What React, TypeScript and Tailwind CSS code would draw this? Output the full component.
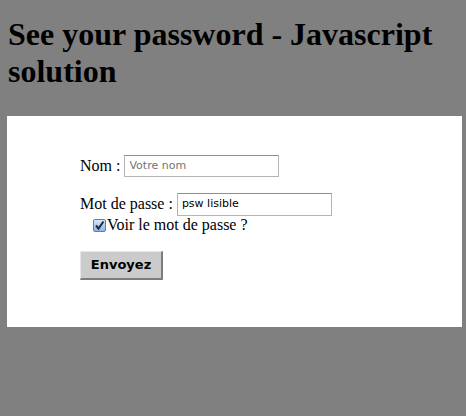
import React from 'react';

const serif = { fontFamily: '"Liberation Serif", "Times New Roman", serif' };
const sans = { fontFamily: '"DejaVu Sans", "Liberation Sans", sans-serif' };

export default function App() {
    return (
        <div className="w-[466px] h-[416px] bg-[#808080] overflow-hidden" style={serif}>
            <h1 className="m-0 pt-[16px] pl-[8px] text-[32px] leading-[37px] font-bold text-black">
                See your password - Javascript solution
            </h1>

            {/* white form panel */}
            <div className="mt-[26px] ml-[7px] w-[455px] h-[211px] bg-white pt-[38px] pl-[73px] text-[16px] text-black">
                <div className="flex items-center h-[24px]">
                    <span className="mr-[4px]">Nom :</span>
                    <div
                        className="w-[155px] h-[22px] border border-[#b5b5b5] border-t-[#8f8f8f] flex items-center pl-[4px] text-[11px] text-[#737373]"
                        style={sans}
                    >
                        Votre nom
                    </div>
                </div>

                <div className="flex items-center h-[24px] mt-[14px]">
                    <span className="mr-[4px]">Mot de passe :</span>
                    <div
                        className="w-[155px] h-[23px] border border-[#b5b5b5] border-t-[#8f8f8f] flex items-center pl-[4px] text-[11px] text-black"
                        style={sans}
                    >
                        psw lisible
                    </div>
                </div>

                <div className="flex items-center h-[16px] mt-[1px] pl-[13px]">
                    <span className="w-[13px] h-[13px] mr-[1px] rounded-[2px] border border-[#5a7fb5] bg-gradient-to-b from-[#d7e7fb] to-[#8fb4e6] flex items-center justify-center">
                        <svg width="11" height="11" viewBox="0 0 11 11">
                            <path d="M2 5.5 L4.5 8.5 L9.5 1.5" fill="none" stroke="#1d2a3c" strokeWidth="2" />
                        </svg>
                    </span>
                    <span>Voir le mot de passe ?</span>
                </div>

                <div className="mt-[18px]">
                    <div
                        className="w-[83px] h-[29px] bg-[#cbcbcb] border-r-2 border-b-2 border-[#7d7d7d] border-t border-l border-t-[#e6e6e6] border-l-[#e6e6e6] flex items-center justify-center text-[13px] font-bold text-black"
                        style={sans}
                    >
                        Envoyez
                    </div>
                </div>
            </div>
        </div>
    );
}
